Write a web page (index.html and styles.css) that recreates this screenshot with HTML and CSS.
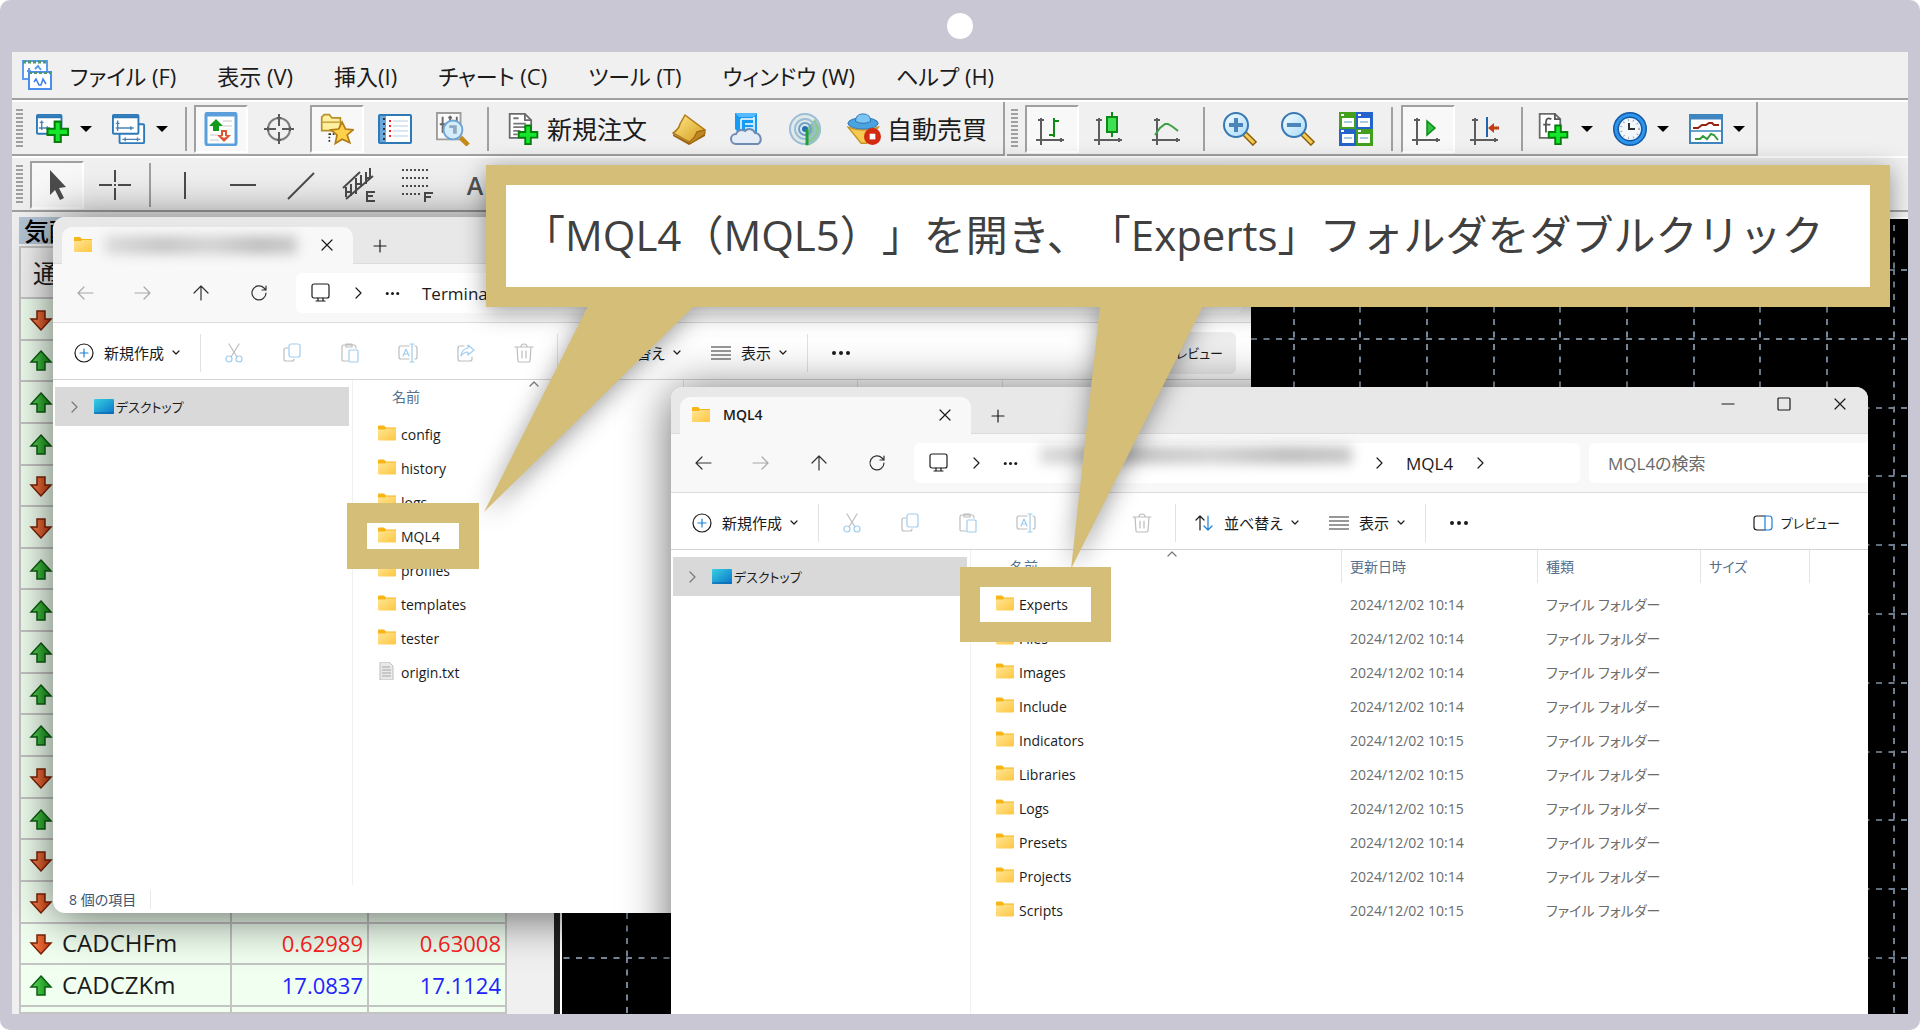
FILE: index.html
```html
<!DOCTYPE html>
<html lang="ja">
<head>
  <meta charset="UTF-8">
  <meta name="viewport" content="width=device-width, initial-scale=1.0">
  <title>MQL4 Experts</title>
  <link rel="stylesheet" href="styles.css">
</head>
<body>
  <!-- Icon sprite -->
  <svg class="sprite" aria-hidden="true">
    <defs>
      <linearGradient id="g-folder" x1="0" y1="0" x2="1" y2="1"><stop offset="0" stop-color="#ffe596"/><stop offset="1" stop-color="#fdc741"/></linearGradient>
      <linearGradient id="g-desk" x1="0" y1="0" x2="1" y2="1"><stop offset="0" stop-color="#36d0e2"/><stop offset="1" stop-color="#0b74c8"/></linearGradient>
      <linearGradient id="g-up" x1="0" x2="1"><stop offset="0" stop-color="#5fd65a"/><stop offset="1" stop-color="#0c8a14"/></linearGradient>
      <linearGradient id="g-down" x1="0" x2="1"><stop offset="0" stop-color="#ff8a55"/><stop offset="1" stop-color="#c4390c"/></linearGradient>
      <linearGradient id="g-gold" x1="0" y1="0" x2="1" y2="1"><stop offset="0" stop-color="#ffe98a"/><stop offset="1" stop-color="#d49a1c"/></linearGradient>
      <linearGradient id="g-lens" x1="0" y1="0" x2="1" y2="1"><stop offset="0" stop-color="#f4fbff"/><stop offset="1" stop-color="#a9dcfa"/></linearGradient>
      <pattern id="p-grid" x="64" y="50" width="200" height="344" patternUnits="userSpaceOnUse">
        <path d="M1 0V344M68 0V344M134 0V344" stroke="#778899" stroke-width="2" stroke-dasharray="6 6.5"/>
        <path d="M0 1H200M0 70H200M0 139H200M0 207H200M0 276H200" stroke="#778899" stroke-width="2" stroke-dasharray="6 6.5"/>
      </pattern>
    </defs>
    <symbol id="i-plus-green" viewBox="0 0 24 24"><path d="M8 1h8v7h7v8h-7v7H8v-7H1V8h7z" fill="#067d0c"/><path d="M10 3h4v7h7v4h-7v7h-4v-7H3v-4h7z" fill="#14e62c"/></symbol>
    <symbol id="i-app" viewBox="0 0 34 34">
      <rect x="3" y="3" width="24" height="18" fill="#fff" stroke="#5b9bf0" stroke-width="2"/><path d="M3 4h24" stroke="#4f9a6c" stroke-width="3" stroke-dasharray="3 2"/><path d="M7 13h4M9 10v6M15 11l3-3 3 4" fill="none" stroke="#5b9bf0" stroke-width="2"/>
      <rect x="9" y="14" width="22" height="17" fill="#fff" stroke="#4b8dea" stroke-width="2"/><path d="M9 15h22" stroke="#4f9a6c" stroke-width="2" stroke-dasharray="3 2"/><path d="M14 24l2-3 3 6h2l2-6 3 5" fill="none" stroke="#3a7eea" stroke-width="1.5"/>
    </symbol>
    <symbol id="i-new-chart" viewBox="0 0 36 34">
      <rect x="1" y="2" width="26" height="20" rx="1" fill="#fff" stroke="#2e79b8" stroke-width="2"/><path d="M1 4h26" stroke="#2e79b8" stroke-width="3"/><path d="M6 8v10M3 16h12M4 10h4M12 14v4" fill="none" stroke="#4a84b4" stroke-width="1.5"/>
      <use href="#i-plus-green" x="10" y="7" width="26" height="26"/>
    </symbol>
    <symbol id="i-profiles" viewBox="0 0 36 34">
      <rect x="8" y="12" width="26" height="20" rx="1" fill="#fff" stroke="#2e79b8" stroke-width="2"/><path d="M11 28h19M14 26v4M27 26v4" fill="none" stroke="#4a84b4" stroke-width="1.5"/>
      <rect x="1" y="2" width="27" height="20" rx="1" fill="#fff" stroke="#2e79b8" stroke-width="2"/><path d="M1 4h27" stroke="#2e79b8" stroke-width="3"/><path d="M6 8v11M4 16h19M4 11h4M20 14v4" fill="none" stroke="#4a84b4" stroke-width="1.5"/>
    </symbol>
    <symbol id="i-market" viewBox="0 0 34 34">
      <rect x="2" y="1" width="30" height="32" rx="2" fill="#fff" stroke="#5a9fdc" stroke-width="3"/><path d="M2 3h30" stroke="#5a9fdc" stroke-width="3"/><path d="M19 9h9M19 14h9M6 23h7M6 28h9" stroke="#e2e2e2" stroke-width="2"/>
      <path d="M12 7l7 7h-4v5H9v-5H5z" fill="#0f9a17"/><path d="M20 30l-7-7h4v-5h6v5h4z" fill="#dc5a33"/><path d="M20 26l-3-2h2v-4h2v4h2z" fill="#fff"/>
    </symbol>
    <symbol id="i-cross" viewBox="0 0 34 34"><circle cx="17" cy="17" r="11" fill="none" stroke="#7d7d7d" stroke-width="2"/><path d="M17 2v12M17 20v12M2 17h12M20 17h12M6 15v4M28 15v4M15 6h4M15 28h4" stroke="#5a5a5a" stroke-width="2"/></symbol>
    <symbol id="i-navigator" viewBox="0 0 40 36">
      <path d="M2 4l3-3h6l3 4h10v15H2z" fill="#fff0a0" stroke="#b8902a" stroke-width="2"/><path d="M2 10h21" stroke="#cfa846" stroke-width="2"/><path d="M11 23v12M11 24h6" stroke="#333" stroke-width="2" stroke-dasharray="2 2"/>
      <path d="M26 10l4 8 9 1-7 6 3 9-9-4-8 5 2-10-7-6 9-1z" fill="#ffd04a" stroke="#b27c14" stroke-width="2"/>
    </symbol>
    <symbol id="i-data" viewBox="0 0 34 34"><rect x="1" y="3" width="32" height="28" rx="1" fill="#fff" stroke="#2e79b8" stroke-width="2"/><path d="M5 4v26" stroke="#6aa8dc" stroke-width="6"/><path d="M6 6v24" stroke="#333" stroke-width="2" stroke-dasharray="2 3"/><path d="M12 8v20" stroke="#e23" stroke-width="2" stroke-dasharray="2 3"/><path d="M15 9h15M15 14h15M15 19h15M15 24h15" stroke="#dbe7f2" stroke-width="2"/></symbol>
    <symbol id="i-tester" viewBox="0 0 36 36"><path d="M1 1h25v28H1z" fill="#fafafa" stroke="#9d9d9d" stroke-width="2"/><path d="M7 5v17M4 13h6M15 4v6M22 5v6M13 6h4" stroke="#666" stroke-width="2"/><path d="M26 27l8 8" stroke="#c58a1c" stroke-width="5"/><circle cx="18" cy="19" r="10" fill="#d5ecfb" stroke="#6da4d4" stroke-width="2"/><path d="M14 14h8v9h-4v-6h-4z" fill="#8fa9bf"/></symbol>
    <symbol id="i-order" viewBox="0 0 34 38"><path d="M1 2h17l7 7v20H1z" fill="#fff" stroke="#6b6b6b" stroke-width="2"/><path d="M18 2v7h7" fill="none" stroke="#6b6b6b" stroke-width="2"/><path d="M5 7h6M5 13h14M5 17h14M5 21h8M5 25h5" stroke="#777" stroke-width="2"/><use href="#i-plus-green" x="9" y="13" width="25" height="25"/></symbol>
    <symbol id="i-book" viewBox="0 0 34 34"><path d="M1 22l17 9 15-11v4L17 33 1 24z" fill="#9b6412"/><path d="M1 21Q7 17 8 12L13 3l20 15-8 2q-3 8-8 10z" fill="url(#g-gold)" stroke="#b07a17" stroke-width="1.5"/><path d="M33 18v4L18 32l-1-2q6-3 8-10z" fill="#c08520" stroke="#9b6412"/></symbol>
    <symbol id="i-cloud" viewBox="0 0 34 34"><path d="M5 1h22v20H9L5 17z" fill="#159bf5"/><path d="M5 1h22l-3 4H9z" fill="#57b9fb"/><path d="M11 7v13M11 7h13M15 12h8M15 16h8M24 5v15" fill="none" stroke="#fff" stroke-width="1.5"/><path d="M6 32a5 5 0 0 1 0-10 6 6 0 0 1 9-3 6 6 0 0 1 10 2 6 6 0 0 1 3 11z" fill="#e6ecf5" stroke="#6f8db4" stroke-width="2"/></symbol>
    <symbol id="i-signal" viewBox="0 0 34 34"><circle cx="17" cy="17" r="16" fill="#dfeae8"/><path d="M18 17v17A17 17 0 0 0 33 17L27 7z" fill="#6ab870" opacity=".7"/><g fill="none" stroke="#9bbdd6" stroke-width="2"><circle cx="17" cy="17" r="15"/><circle cx="17" cy="17" r="10"/><circle cx="17" cy="17" r="6" stroke="#6f9fc6"/></g><circle cx="17" cy="17" r="3" fill="#2470bd"/><path d="M19 17v16" stroke="#22a03a" stroke-width="3"/></symbol>
    <symbol id="i-auto" viewBox="0 0 36 34"><path d="M1 15q16 6 32 0L21 32h-6z" fill="#f6c951" stroke="#c69324" stroke-width="1.5"/><ellipse cx="17" cy="11" rx="16" ry="6" fill="#4aa3de" stroke="#2a74b3"/><path d="M9 9q0-8 8-8t8 8q-8 4-16 0z" fill="#7cc4f2" stroke="#2a74b3"/><circle cx="27" cy="25" r="9" fill="#d32a12"/><rect x="24" y="22" width="6" height="6" fill="#fff"/></symbol>
    <symbol id="i-bars" viewBox="0 0 34 34"><path d="M6 6v27M1 28h28M3 8h6M26 26v4" fill="none" stroke="#5d5d5d" stroke-width="2"/><path d="M19 6v19M14 23h5M19 9h5" stroke="#108a16" stroke-width="2"/></symbol>
    <symbol id="i-candle" viewBox="0 0 34 34"><path d="M6 6v27M1 28h28M3 8h6M26 26v4" fill="none" stroke="#5d5d5d" stroke-width="2"/><path d="M19 0v25" stroke="#108a16" stroke-width="2"/><rect x="14" y="5" width="10" height="15" fill="#3de152" stroke="#108a16" stroke-width="2"/></symbol>
    <symbol id="i-line" viewBox="0 0 34 34"><path d="M6 6v27M1 28h28M3 8h6M26 26v4" fill="none" stroke="#5d5d5d" stroke-width="2"/><path d="M4 23l5-7 5-4h3l5 3 5 4" fill="none" stroke="#3da044" stroke-width="2"/></symbol>
    <symbol id="i-zoom-in" viewBox="0 0 34 34"><path d="M21 21l11 11" stroke="#8f5f0c" stroke-width="6"/><path d="M22 22l9 9" stroke="#f3cf58" stroke-width="3"/><circle cx="13" cy="13" r="12" fill="url(#g-lens)" stroke="#3878b4" stroke-width="2"/><path d="M13 6v14M6 13h14" stroke="#4c86b8" stroke-width="4"/></symbol>
    <symbol id="i-zoom-out" viewBox="0 0 34 34"><path d="M21 21l11 11" stroke="#8f5f0c" stroke-width="6"/><path d="M22 22l9 9" stroke="#f3cf58" stroke-width="3"/><circle cx="13" cy="13" r="12" fill="url(#g-lens)" stroke="#3878b4" stroke-width="2"/><path d="M6 13h14" stroke="#4c86b8" stroke-width="4"/></symbol>
    <symbol id="i-tile" viewBox="0 0 34 34"><path d="M0 0h17v17H0zM17 17h17v17H17z" fill="#43a01c"/><path d="M17 0h17v17H17zM0 17h17v17H0z" fill="#2463cc"/><path d="M3 6h12v9H3zM19 6h12v9H19zM3 22h12v9H3zM19 22h12v9H19z" fill="#fff"/><path d="M5 10h8M21 10h8M5 26h8M21 26h8" stroke="#a9cbe0" stroke-width="2"/><path d="M2 3h3M19 3h3M2 19h3M19 19h3" stroke="#fff" stroke-width="2"/></symbol>
    <symbol id="i-scroll" viewBox="0 0 34 34"><path d="M6 6v27M1 28h28M3 8h6M26 26v4" fill="none" stroke="#5d5d5d" stroke-width="2"/><path d="M16 9l8 7-8 7z" fill="#2fc341" stroke="#108a16" stroke-width="1.5"/></symbol>
    <symbol id="i-shift" viewBox="0 0 34 34"><path d="M6 6v27M1 28h28M3 8h6M26 26v4" fill="none" stroke="#5d5d5d" stroke-width="2"/><path d="M18 5v20" stroke="#1c66ad" stroke-width="2"/><path d="M30 16h-6" stroke="#c23e12" stroke-width="3"/><path d="M19 16l6-5v10z" fill="#c23e12"/></symbol>
    <symbol id="i-indicator" viewBox="0 0 34 38"><path d="M1 2h17l6 6v21H1z" fill="#fff" stroke="#6b6b6b" stroke-width="2"/><path d="M18 2v6h6M14 8q-6-3-6 4v11M5 14h8" fill="none" stroke="#555" stroke-width="2"/><use href="#i-plus-green" x="9" y="13" width="25" height="25"/></symbol>
    <symbol id="i-clock" viewBox="0 0 34 34"><circle cx="17" cy="17" r="14" fill="#f2f7fb" stroke="#1159a8" stroke-width="6"/><circle cx="17" cy="17" r="14" fill="none" stroke="#2f94ea" stroke-width="3"/><path d="M16 11v6h6" fill="none" stroke="#333" stroke-width="2"/><circle cx="17" cy="17" r="9" fill="none" stroke="#9aa7b2" stroke-width="2" stroke-dasharray="1 4"/></symbol>
    <symbol id="i-template" viewBox="0 0 34 34"><rect x="1" y="3" width="32" height="28" fill="#fff" stroke="#3f85c0" stroke-width="2"/><path d="M1 5h32" stroke="#3f85c0" stroke-width="5"/><path d="M2 19h30" stroke="#6ba3d0" stroke-width="2"/><path d="M4 16h5l4-3h4l3-2h3l2 2h5" fill="none" stroke="#962312" stroke-width="2"/><path d="M6 27h5l3-3 4 3 4-5 3 1 4 5" fill="none" stroke="#329a38" stroke-width="2"/></symbol>
    <symbol id="i-cursor" viewBox="0 0 34 34"><path d="M10 2l16 17-7 1 5 10-4 2-5-10-5 5z" fill="#4c4c4c"/></symbol>
    <symbol id="i-crosshair" viewBox="0 0 34 34"><path d="M17 2v12M17 20v12M1 17h13M20 17h13M16 17h2" stroke="#4c4c4c" stroke-width="2"/></symbol>
    <symbol id="i-vline" viewBox="0 0 34 34"><path d="M17 4v27" stroke="#4c4c4c" stroke-width="2"/></symbol>
    <symbol id="i-hline" viewBox="0 0 34 34"><path d="M4 17h26" stroke="#4c4c4c" stroke-width="2"/></symbol>
    <symbol id="i-trend" viewBox="0 0 34 34"><path d="M4 31L30 5" stroke="#4c4c4c" stroke-width="2"/></symbol>
    <symbol id="i-channel" viewBox="0 0 34 34"><path d="M1 20L18 4M4 31L31 8M4 19v10M9 16v12M14 10v16M19 7v12M24 4v12M28 0v11M4 24h5M14 16h5M24 10h4" stroke="#4c4c4c" stroke-width="2"/><path d="M33 24h-8v9h8M25 28h6" fill="none" stroke="#4c4c4c" stroke-width="2"/></symbol>
    <symbol id="i-fibo" viewBox="0 0 34 34"><path d="M2 2h28M2 10h28M2 18h28M2 26h20" stroke="#4c4c4c" stroke-width="2" stroke-dasharray="2 2"/><path d="M25 34V25h8M25 29h6" fill="none" stroke="#4c4c4c" stroke-width="2"/></symbol>

    <symbol id="i-up" viewBox="0 0 24 24"><path d="M12 2l10 11h-6v8H8v-8H2z" fill="url(#g-up)" stroke="#0b5d10" stroke-width="1.5"/></symbol>
    <symbol id="i-down" viewBox="0 0 24 24"><path d="M12 22L2 11h6V3h8v8h6z" fill="url(#g-down)" stroke="#7c2208" stroke-width="1.5"/></symbol>

    <symbol id="i-folder" viewBox="0 0 18 15"><path d="M0 1q0-1 1-1h5l2 2h10v5H0z" fill="#f8b516"/><path d="M0 4h7l1-1h10v11q0 1-1 1H1q-1 0-1-1z" fill="url(#g-folder)"/></symbol>
    <symbol id="i-file" viewBox="0 0 18 18"><path d="M2 0h9l4 4v14H2z" fill="#e9e9e9" stroke="#bdbdbd"/><path d="M4 5h8M4 8h9M4 11h9M4 14h9" stroke="#a5a5a5"/></symbol>
    <symbol id="i-desktop" viewBox="0 0 20 15"><rect width="20" height="15" rx="1" fill="url(#g-desk)"/><path d="M0 14h20" stroke="#0a5fa8"/></symbol>
    <symbol id="i-back" viewBox="0 0 20 20"><path d="M18 10H3M9 4l-6 6 6 6" class="ln"/></symbol>
    <symbol id="i-forward" viewBox="0 0 20 20"><path d="M2 10h15M11 4l6 6-6 6" class="ln"/></symbol>
    <symbol id="i-parent" viewBox="0 0 20 20"><path d="M10 17V3M3 10l7-7 7 7" class="ln"/></symbol>
    <symbol id="i-reload" viewBox="0 0 20 20"><path d="M17 10a7 7 0 1 1-2-5l2 2M17 3v4h-4" class="ln"/></symbol>
    <symbol id="i-monitor" viewBox="0 0 20 20"><rect x="1" y="1" width="17" height="14" rx="2" class="ln"/><path d="M7 15v3M12 15v3M5 18h9" class="ln"/></symbol>
    <symbol id="i-chev-r" viewBox="0 0 10 14"><path d="M3 2l5 5-5 5" class="ln"/></symbol>
    <symbol id="i-chev-d" viewBox="0 0 10 10"><path d="M2 3l3 3 3-3" class="ln"/></symbol>
    <symbol id="i-chev-u" viewBox="0 0 10 6"><path d="M1 5l4-4 4 4" class="ln"/></symbol>
    <symbol id="i-dots" viewBox="0 0 20 6"><circle cx="3" cy="3" r="2" fill="currentColor"/><circle cx="10" cy="3" r="2" fill="currentColor"/><circle cx="17" cy="3" r="2" fill="currentColor"/></symbol>
    <symbol id="i-x" viewBox="0 0 14 14"><path d="M2 2l10 10M12 2L2 12" class="ln"/></symbol>
    <symbol id="i-plus" viewBox="0 0 14 14"><path d="M7 1v12M1 7h12" class="ln"/></symbol>
    <symbol id="i-min" viewBox="0 0 14 14"><path d="M1 7h12" class="ln"/></symbol>
    <symbol id="i-max" viewBox="0 0 14 14"><rect x="1" y="1" width="12" height="12" rx="1" class="ln"/></symbol>
    <symbol id="i-new" viewBox="0 0 20 20"><circle cx="10" cy="10" r="9" class="ln"/><path d="M10 6v8M6 10h8" class="ln blue"/></symbol>
    <symbol id="i-cut" viewBox="0 0 20 20"><path d="M5 1l8 13M15 1L7 14" class="ln pale"/><circle cx="5" cy="16" r="3" class="ln sky"/><circle cx="15" cy="16" r="3" class="ln sky"/></symbol>
    <symbol id="i-copy" viewBox="0 0 20 20"><path d="M6 5H4q-2 0-2 2v9q0 2 2 2h6q2 0 2-2" class="ln pale"/><rect x="7" y="1" width="11" height="13" rx="2" class="ln sky"/></symbol>
    <symbol id="i-paste" viewBox="0 0 20 20"><path d="M8 18H4q-2 0-2-1V4q0-2 2-2h10q2 0 2 3M6 1h6v3H6z" class="ln pale"/><rect x="9" y="7" width="9" height="12" rx="1" class="ln sky"/></symbol>
    <symbol id="i-rename" viewBox="0 0 20 20"><path d="M11 3H3q-2 0-2 2v9q0 2 2 2h8M17 3q2 0 2 2v9q0 2-2 2" class="ln pale"/><path d="M14 1v18M12 1h4M12 19h4M5 13l3-7 3 7M6 11h4" class="ln sky"/></symbol>
    <symbol id="i-share" viewBox="0 0 20 20"><path d="M8 3H4Q2 3 2 5v11q0 2 2 2h10q2 0 2-2v-2" class="ln pale"/><path d="M12 2l6 5-6 5V9q-4 0-7 4 1-7 7-8z" class="ln sky"/></symbol>
    <symbol id="i-trash" viewBox="0 0 20 20"><path d="M1 4h18M7 4q0-3 3-3t3 3M3 4l1 14q0 1 2 1h8q2 0 2-1l1-14M8 8v7M12 8v7" class="ln pale"/></symbol>
    <symbol id="i-sort" viewBox="0 0 20 20"><path d="M6 17V3M2 7l4-4 4 4" class="ln"/><path d="M14 3v14M10 13l4 4 4-4" class="ln blue"/></symbol>
    <symbol id="i-list" viewBox="0 0 20 20"><path d="M0 4h20M0 8h20M0 12h20M0 16h20" stroke="#777" stroke-width="1.5"/></symbol>
    <symbol id="i-preview" viewBox="0 0 20 20"><path d="M12 3H4Q1 3 1 6v8q0 3 3 3h8" class="ln"/><path d="M12 3h4q3 0 3 3v8q0 3-3 3h-4z" class="ln blue"/></symbol>
  </svg>

  <div class="camera"></div>

  <main class="screen">
    <!-- Trading terminal -->
    <nav class="menu">
      <svg class="menu-logo"><use href="#i-app"/></svg>
      <button>ファイル (F)</button>
      <button>表示 (V)</button>
      <button>挿入(I)</button>
      <button>チャート (C)</button>
      <button>ツール (T)</button>
      <button>ウィンドウ (W)</button>
      <button>ヘルプ (H)</button>
    </nav>

    <div class="toolbar-row">
      <div class="toolbar">
        <i class="grip"></i>
        <button class="tool drop" aria-label="新規チャート"><svg><use href="#i-new-chart"/></svg></button>
        <button class="tool drop" aria-label="プロファイル"><svg><use href="#i-profiles"/></svg></button>
        <i class="line"></i>
        <button class="tool on" aria-label="気配値"><svg><use href="#i-market"/></svg></button>
        <button class="tool" aria-label="照準"><svg><use href="#i-cross"/></svg></button>
        <button class="tool on" aria-label="ナビゲーター"><svg><use href="#i-navigator"/></svg></button>
        <button class="tool" aria-label="データ"><svg><use href="#i-data"/></svg></button>
        <button class="tool" aria-label="テスター"><svg><use href="#i-tester"/></svg></button>
        <i class="line"></i>
        <button class="tool wide"><svg><use href="#i-order"/></svg>新規注文</button>
        <button class="tool" aria-label="エディター"><svg><use href="#i-book"/></svg></button>
        <button class="tool" aria-label="クラウド"><svg><use href="#i-cloud"/></svg></button>
        <button class="tool" aria-label="シグナル"><svg><use href="#i-signal"/></svg></button>
        <button class="tool wide"><svg><use href="#i-auto"/></svg>自動売買</button>
      </div>
      <div class="toolbar charts">
        <i class="grip"></i>
        <button class="tool on" aria-label="バー"><svg><use href="#i-bars"/></svg></button>
        <button class="tool" aria-label="ローソク足"><svg><use href="#i-candle"/></svg></button>
        <button class="tool" aria-label="ライン"><svg><use href="#i-line"/></svg></button>
        <i class="line"></i>
        <button class="tool" aria-label="拡大"><svg><use href="#i-zoom-in"/></svg></button>
        <button class="tool" aria-label="縮小"><svg><use href="#i-zoom-out"/></svg></button>
        <button class="tool" aria-label="整列"><svg><use href="#i-tile"/></svg></button>
        <i class="line"></i>
        <button class="tool on" aria-label="自動スクロール"><svg><use href="#i-scroll"/></svg></button>
        <button class="tool" aria-label="シフト"><svg><use href="#i-shift"/></svg></button>
        <i class="line"></i>
        <button class="tool drop" aria-label="インディケータ"><svg><use href="#i-indicator"/></svg></button>
        <button class="tool drop" aria-label="時間足"><svg><use href="#i-clock"/></svg></button>
        <button class="tool drop" aria-label="定型チャート"><svg><use href="#i-template"/></svg></button>
      </div>
    </div>

    <div class="toolbar-row studies">
      <i class="grip"></i>
      <button class="tool on" aria-label="カーソル"><svg><use href="#i-cursor"/></svg></button>
      <button class="tool" aria-label="十字カーソル"><svg><use href="#i-crosshair"/></svg></button>
      <i class="line"></i>
      <button class="tool" aria-label="垂直線"><svg><use href="#i-vline"/></svg></button>
      <button class="tool" aria-label="水平線"><svg><use href="#i-hline"/></svg></button>
      <button class="tool" aria-label="トレンドライン"><svg><use href="#i-trend"/></svg></button>
      <button class="tool" aria-label="チャネル"><svg><use href="#i-channel"/></svg></button>
      <button class="tool" aria-label="フィボナッチ"><svg><use href="#i-fibo"/></svg></button>
      <button class="tool letter">A</button>
    </div>

    <div class="workspace">
      <section class="quotes">
        <h2>気配値表示</h2>
        <div class="quotes-body">
          <table>
            <thead><tr><th>通貨ペア</th><th></th><th></th></tr></thead>
            <tbody>
              <tr><td><svg><use href="#i-down"/></svg></td><td></td><td></td></tr>
              <tr><td><svg><use href="#i-up"/></svg></td><td></td><td></td></tr>
              <tr><td><svg><use href="#i-up"/></svg></td><td></td><td></td></tr>
              <tr><td><svg><use href="#i-up"/></svg></td><td></td><td></td></tr>
              <tr><td><svg><use href="#i-down"/></svg></td><td></td><td></td></tr>
              <tr><td><svg><use href="#i-down"/></svg></td><td></td><td></td></tr>
              <tr><td><svg><use href="#i-up"/></svg></td><td></td><td></td></tr>
              <tr><td><svg><use href="#i-up"/></svg></td><td></td><td></td></tr>
              <tr><td><svg><use href="#i-up"/></svg></td><td></td><td></td></tr>
              <tr><td><svg><use href="#i-up"/></svg></td><td></td><td></td></tr>
              <tr><td><svg><use href="#i-up"/></svg></td><td></td><td></td></tr>
              <tr><td><svg><use href="#i-down"/></svg></td><td></td><td></td></tr>
              <tr><td><svg><use href="#i-up"/></svg></td><td></td><td></td></tr>
              <tr><td><svg><use href="#i-down"/></svg></td><td></td><td></td></tr>
              <tr><td><svg><use href="#i-down"/></svg></td><td></td><td></td></tr>
              <tr class="fall"><td><svg><use href="#i-down"/></svg>CADCHFm</td><td>0.62989</td><td>0.63008</td></tr>
              <tr class="rise"><td><svg><use href="#i-up"/></svg>CADCZKm</td><td>17.0837</td><td>17.1124</td></tr>
              <tr class="cut"><td></td><td></td><td></td></tr>
            </tbody>
          </table>
        </div>
      </section>
      <svg class="chart"><rect width="100%" height="100%" fill="url(#p-grid)"/></svg>
    </div>

    <!-- Explorer: Terminal -->
    <section class="window window-back">
      <header class="tabs">
        <div class="tab">
          <svg class="folder"><use href="#i-folder"/></svg>
          <span class="tab-name"><i class="smudge"></i></span>
          <button aria-label="閉じる"><svg class="s14"><use href="#i-x"/></svg></button>
        </div>
        <button class="add" aria-label="タブを追加"><svg class="s14"><use href="#i-plus"/></svg></button>
      </header>
      <div class="nav">
        <button class="off" aria-label="戻る"><svg class="s20"><use href="#i-back"/></svg></button>
        <button class="off" aria-label="進む"><svg class="s20"><use href="#i-forward"/></svg></button>
        <button aria-label="上へ"><svg class="s20"><use href="#i-parent"/></svg></button>
        <button aria-label="更新"><svg class="s20"><use href="#i-reload"/></svg></button>
        <div class="address">
          <svg class="s20"><use href="#i-monitor"/></svg>
          <svg class="chev"><use href="#i-chev-r"/></svg>
          <svg class="dots"><use href="#i-dots"/></svg>
          <span>Terminal</span>
        </div>
      </div>
      <div class="commands">
        <button class="cmd"><svg class="s20"><use href="#i-new"/></svg>新規作成<svg class="s10"><use href="#i-chev-d"/></svg></button>
        <i class="rule"></i>
        <button class="act" aria-label="切り取り"><svg class="s20"><use href="#i-cut"/></svg></button>
        <button class="act" aria-label="コピー"><svg class="s20"><use href="#i-copy"/></svg></button>
        <button class="act" aria-label="貼り付け"><svg class="s20"><use href="#i-paste"/></svg></button>
        <button class="act" aria-label="名前の変更"><svg class="s20"><use href="#i-rename"/></svg></button>
        <button class="act" aria-label="共有"><svg class="s20"><use href="#i-share"/></svg></button>
        <button class="act" aria-label="削除"><svg class="s20"><use href="#i-trash"/></svg></button>
        <i class="rule"></i>
        <button class="cmd"><svg class="s20"><use href="#i-sort"/></svg>並べ替え<svg class="s10"><use href="#i-chev-d"/></svg></button>
        <button class="cmd"><svg class="s20"><use href="#i-list"/></svg>表示<svg class="s10"><use href="#i-chev-d"/></svg></button>
        <i class="rule"></i>
        <button class="act" aria-label="その他"><svg class="s20"><use href="#i-dots"/></svg></button>
        <button class="preview hover"><svg class="s20"><use href="#i-preview"/></svg>プレビュー</button>
      </div>
      <div class="panes">
        <aside><a href="#" class="place"><svg class="chev"><use href="#i-chev-r"/></svg><svg class="desk"><use href="#i-desktop"/></svg>デスクトップ</a></aside>
        <div class="list">
          <svg class="sorted"><use href="#i-chev-u"/></svg>
          <table class="files">
            <colgroup><col class="c-name"><col class="c-date"><col class="c-type"><col></colgroup>
            <thead><tr><th><span>名前</span></th><th><span></span></th><th><span></span></th><th></th></tr></thead>
            <tbody>
              <tr><td><svg class="ico"><use href="#i-folder"/></svg>config</td></tr>
              <tr><td><svg class="ico"><use href="#i-folder"/></svg>history</td></tr>
              <tr><td><svg class="ico"><use href="#i-folder"/></svg>logs</td></tr>
              <tr><td><svg class="ico"><use href="#i-folder"/></svg>MQL4</td></tr>
              <tr><td><svg class="ico"><use href="#i-folder"/></svg>profiles</td></tr>
              <tr><td><svg class="ico"><use href="#i-folder"/></svg>templates</td></tr>
              <tr><td><svg class="ico"><use href="#i-folder"/></svg>tester</td></tr>
              <tr><td><svg class="ico"><use href="#i-file"/></svg>origin.txt</td></tr>
            </tbody>
          </table>
        </div>
      </div>
      <footer class="status"><span>8 個の項目</span></footer>
    </section>

    <!-- Explorer: MQL4 -->
    <section class="window window-front">
      <header class="tabs">
        <div class="tab">
          <svg class="folder"><use href="#i-folder"/></svg>
          <span class="tab-name">MQL4</span>
          <button aria-label="閉じる"><svg class="s14"><use href="#i-x"/></svg></button>
        </div>
        <button class="add" aria-label="タブを追加"><svg class="s14"><use href="#i-plus"/></svg></button>
        <div class="controls">
          <button aria-label="最小化"><svg class="s14"><use href="#i-min"/></svg></button>
          <button aria-label="最大化"><svg class="s14"><use href="#i-max"/></svg></button>
          <button aria-label="閉じる"><svg class="s14"><use href="#i-x"/></svg></button>
        </div>
      </header>
      <div class="nav">
        <button aria-label="戻る"><svg class="s20"><use href="#i-back"/></svg></button>
        <button class="off" aria-label="進む"><svg class="s20"><use href="#i-forward"/></svg></button>
        <button aria-label="上へ"><svg class="s20"><use href="#i-parent"/></svg></button>
        <button aria-label="更新"><svg class="s20"><use href="#i-reload"/></svg></button>
        <div class="address">
          <svg class="s20"><use href="#i-monitor"/></svg>
          <svg class="chev"><use href="#i-chev-r"/></svg>
          <svg class="dots"><use href="#i-dots"/></svg>
          <i class="smudge long"></i>
          <svg class="chev"><use href="#i-chev-r"/></svg>
          <span>MQL4</span>
          <svg class="chev"><use href="#i-chev-r"/></svg>
        </div>
        <input class="search" type="search" placeholder="MQL4の検索" aria-label="MQL4の検索">
      </div>
      <div class="commands">
        <button class="cmd"><svg class="s20"><use href="#i-new"/></svg>新規作成<svg class="s10"><use href="#i-chev-d"/></svg></button>
        <i class="rule"></i>
        <button class="act" aria-label="切り取り"><svg class="s20"><use href="#i-cut"/></svg></button>
        <button class="act" aria-label="コピー"><svg class="s20"><use href="#i-copy"/></svg></button>
        <button class="act" aria-label="貼り付け"><svg class="s20"><use href="#i-paste"/></svg></button>
        <button class="act" aria-label="名前の変更"><svg class="s20"><use href="#i-rename"/></svg></button>
        <button class="act" aria-label="共有"></button>
        <button class="act" aria-label="削除"><svg class="s20"><use href="#i-trash"/></svg></button>
        <i class="rule"></i>
        <button class="cmd"><svg class="s20"><use href="#i-sort"/></svg>並べ替え<svg class="s10"><use href="#i-chev-d"/></svg></button>
        <button class="cmd"><svg class="s20"><use href="#i-list"/></svg>表示<svg class="s10"><use href="#i-chev-d"/></svg></button>
        <i class="rule"></i>
        <button class="act" aria-label="その他"><svg class="s20"><use href="#i-dots"/></svg></button>
        <button class="preview"><svg class="s20"><use href="#i-preview"/></svg>プレビュー</button>
      </div>
      <div class="panes">
        <aside><a href="#" class="place"><svg class="chev"><use href="#i-chev-r"/></svg><svg class="desk"><use href="#i-desktop"/></svg>デスクトップ</a></aside>
        <div class="list">
          <svg class="sorted"><use href="#i-chev-u"/></svg>
          <table class="files">
            <colgroup><col class="c-name"><col class="c-date"><col class="c-type"><col class="c-size"><col></colgroup>
            <thead><tr><th><span>名前</span></th><th><span>更新日時</span></th><th><span>種類</span></th><th><span>サイズ</span></th><th></th></tr></thead>
            <tbody>
              <tr><td><svg class="ico"><use href="#i-folder"/></svg>Experts</td><td>2024/12/02 10:14</td><td>ファイル フォルダー</td></tr>
              <tr><td><svg class="ico"><use href="#i-folder"/></svg>Files</td><td>2024/12/02 10:14</td><td>ファイル フォルダー</td></tr>
              <tr><td><svg class="ico"><use href="#i-folder"/></svg>Images</td><td>2024/12/02 10:14</td><td>ファイル フォルダー</td></tr>
              <tr><td><svg class="ico"><use href="#i-folder"/></svg>Include</td><td>2024/12/02 10:14</td><td>ファイル フォルダー</td></tr>
              <tr><td><svg class="ico"><use href="#i-folder"/></svg>Indicators</td><td>2024/12/02 10:15</td><td>ファイル フォルダー</td></tr>
              <tr><td><svg class="ico"><use href="#i-folder"/></svg>Libraries</td><td>2024/12/02 10:15</td><td>ファイル フォルダー</td></tr>
              <tr><td><svg class="ico"><use href="#i-folder"/></svg>Logs</td><td>2024/12/02 10:15</td><td>ファイル フォルダー</td></tr>
              <tr><td><svg class="ico"><use href="#i-folder"/></svg>Presets</td><td>2024/12/02 10:14</td><td>ファイル フォルダー</td></tr>
              <tr><td><svg class="ico"><use href="#i-folder"/></svg>Projects</td><td>2024/12/02 10:14</td><td>ファイル フォルダー</td></tr>
              <tr><td><svg class="ico"><use href="#i-folder"/></svg>Scripts</td><td>2024/12/02 10:15</td><td>ファイル フォルダー</td></tr>
            </tbody>
          </table>
        </div>
      </div>
    </section>

    <!-- Callout and the two marked folders -->
    <div class="callout">
      <svg class="pointers" viewBox="0 0 730 264"><path d="M106 0h106L2 206zM618 0h103L589 263z" fill="#d5be78"/></svg>
      <p>「MQL4（MQL5）」を開き、「Experts」フォルダをダブルクリック</p>
    </div>
    <div class="mark mark-mql4"></div>
    <div class="mark mark-experts"></div>
  </main>
</body>
</html>
```
FILE: styles.css
```css
* {
  box-sizing: border-box;
}

html {
  background: #fff;
}

body {
  margin: 0;
  height: 100vh;
  padding: 0 12px 16px;
  display: flex;
  flex-direction: column;
  background: #c8c7d3;
  border-radius: 10px;
  overflow: hidden;
  font-family: "Open Sans", "Noto Sans CJK JP", sans-serif;
  font-feature-settings: "palt";
  font-size: 14px;
  color: #1b1b1b;
}

button {
  margin: 0;
  padding: 0;
  border: 0;
  background: none;
  font: inherit;
  font-feature-settings: inherit;
  color: inherit;
  display: flex;
  align-items: center;
  justify-content: center;
  white-space: nowrap;
}

svg {
  flex: none;
}

.sprite {
  position: absolute;
  width: 0;
  height: 0;
}

.ln {
  fill: none;
  stroke: currentColor;
  stroke-width: 1.2;
  stroke-linecap: round;
  stroke-linejoin: round;
}

.blue { stroke: #1a7fd4; }
.sky { stroke: #9fcdf0; }
.pale { stroke: #bdbdbd; }

.s10 { width: 10px; height: 10px; }
.s14 { width: 14px; height: 14px; }
.s20 { width: 20px; height: 20px; }
.chev { width: 10px; height: 14px; }
.dots { width: 15px; height: 5px; }

.camera {
  width: 26px;
  height: 26px;
  margin: 13px auto;
  border-radius: 50%;
  background: #fff;
  flex: none;
}

.screen {
  position: relative;
  flex: 1;
  min-height: 0;
  display: flex;
  flex-direction: column;
  overflow: hidden;
  background: #f0f0f0;
}

/* Trading terminal */
.menu {
  height: 48px;
  flex: none;
  display: flex;
  align-items: center;
  gap: 41px;
  padding-left: 8px;
  border-bottom: 2px solid #a0a0a0;
  font-size: 22px;
}

.menu-logo {
  width: 34px;
  height: 34px;
  margin-right: -25px;
}

.toolbar-row {
  display: flex;
  flex: none;
  height: 56px;
  border-top: 2px solid #fff;
}

.toolbar {
  display: flex;
  align-items: center;
  gap: 4px;
  padding: 2px 1px 0 4px;
  border: solid #a0a0a0;
  border-width: 0 2px 2px 0;
}

.toolbar:first-child {
  padding-right: 5px;
  margin-right: 2px;
}

.studies {
  align-items: center;
  gap: 4px;
  padding: 2px 0 0 4px;
  border-bottom: 2px solid #a0a0a0;
}

.grip {
  width: 7px;
  height: 40px;
  margin-right: 3px;
  flex: none;
  background: repeating-linear-gradient(#a0a0a0 0 2px, transparent 2px 4px);
}

.line {
  width: 2px;
  height: 44px;
  margin: 0 3px;
  flex: none;
  background: #a0a0a0;
}

.charts .line {
  margin: 0 4px;
}

.tool {
  width: 54px;
  height: 48px;
  flex: none;
  border: 2px solid transparent;
}

.tool svg {
  width: 34px;
  height: 34px;
}

.tool.on {
  background: #f8f8f8;
  border-color: #a0a0a0 #fff #fff #a0a0a0;
}

.tool.drop {
  width: 72px;
  justify-content: flex-start;
  padding-left: 4px;
  gap: 10px;
}

.tool.drop::after {
  content: "";
  border: 6px solid transparent;
  border-top-color: #000;
  border-bottom: 0;
}

.tool.wide {
  width: 162px;
  justify-content: flex-start;
  padding-left: 9px;
  gap: 6px;
  font-size: 25px;
  line-height: 30px;
}

.tool.letter {
  font-size: 25px;
  font-weight: 600;
  color: #555;
}

.workspace {
  flex: 1;
  min-height: 0;
  display: flex;
  padding-top: 5px;
}

.quotes {
  width: 548px;
  flex: none;
  display: flex;
  flex-direction: column;
  padding: 0 47px 0 7px;
  border-right: 6px solid #222;
}

.quotes h2 {
  margin: 0 0 2px;
  padding-left: 5px;
  height: 27px;
  line-height: 28px;
  font-size: 25px;
  font-weight: 500;
  background: #b4c4d4;
  color: #000;
}

.quotes-body {
  flex: 1;
  min-height: 0;
}

.quotes table {
  width: 100%;
  height: 100%;
  table-layout: fixed;
  border-collapse: collapse;
  font-size: 25px;
  line-height: 30px;
}

.quotes th,
.quotes td {
  padding: 0 4px 0 0;
  border: 2px solid #c4c4c4;
}

.quotes th {
  height: 51px;
  padding-left: 12px;
  text-align: left;
  font-weight: 400;
  background: #f2f2f2;
}

.quotes th:first-child { width: 211px; }
.quotes th:nth-child(2) { width: 137px; }

.quotes td {
  background: #f0fff0;
  text-align: right;
  font-size: 22px;
}

.quotes td:first-child {
  padding-left: 8px;
  text-align: left;
  font-size: 24px;
}

.quotes td svg {
  width: 24px;
  height: 24px;
  margin-right: 9px;
  vertical-align: -4px;
}

.quotes .cut td { height: 7px; }
.fall td + td { color: #f22; }
.rise td + td { color: #22f; }

.chart {
  flex: 1;
  height: 100%;
  min-width: 0;
  background: #000;
  border: solid #fff;
  border-width: 2px 0 0 2px;
}

/* Explorer windows */
.window {
  position: absolute;
  display: flex;
  flex-direction: column;
  overflow: hidden;
  border-radius: 12px;
  background: #fff;
  box-shadow: 0 4px 48px rgba(0, 0, 0, 0.6);
}

.window-back {
  left: 41px;
  right: 657px;
  top: 165px;
  bottom: 101px;
}

.window-front {
  left: 659px;
  right: 40px;
  top: 335px;
  bottom: 0;
  border-radius: 12px 12px 0 0;
}

.tabs {
  height: 47px;
  flex: none;
  display: flex;
  align-items: flex-end;
  padding-left: 9px;
  background: #e8e8e8;
  border-bottom: 1px solid #dcdcdc;
}

.tab {
  width: 291px;
  height: 37px;
  margin-bottom: -1px;
  padding: 0 19px 2px 12px;
  display: flex;
  align-items: center;
  border-radius: 10px 10px 0 0;
  background: #f8f8f8;
}

.folder {
  width: 18px;
  height: 15px;
  margin-right: 13px;
}

.tab-name {
  flex: 1;
  font-weight: 600;
}

.smudge {
  display: block;
  width: 192px;
  height: 18px;
  background: linear-gradient(90deg, #dadada, #c4c4c4 30%, #d2d2d2 55%, #bdbdbd 80%, #c8c8c8);
  filter: blur(6px);
}

.smudge.long {
  width: 312px;
  margin-bottom: 16px;
}

.add {
  width: 54px;
  height: 35px;
}

.controls {
  display: flex;
  align-self: flex-start;
  margin-left: auto;
}

.controls button {
  width: 56px;
  height: 33px;
}

.nav {
  height: 59px;
  flex: none;
  display: flex;
  align-items: center;
  padding-left: 3px;
  background: #f8f8f8;
  border-bottom: 1px solid #dcdcdc;
  font-size: 17px;
}

.nav button {
  width: 58px;
  height: 40px;
  color: #333;
}

.nav button.off {
  color: #a8a8a8;
}

.address {
  flex: 1;
  height: 40px;
  margin: 0 9px 0 8px;
  padding-left: 15px;
  display: flex;
  align-items: center;
  gap: 22px;
  border-radius: 6px;
  background: #fff;
}

.search {
  width: 279px;
  height: 40px;
  padding: 0 19px;
  border: 0;
  border-radius: 6px 0 0 6px;
  background: #fff;
  font: inherit;
  font-feature-settings: inherit;
}

.search::placeholder {
  color: #6a6a6a;
}

.commands {
  height: 57px;
  flex: none;
  display: flex;
  align-items: center;
  padding: 3px 15px 0 7px;
  border-bottom: 1px solid #d4d4d4;
  font-size: 15px;
}

.cmd {
  gap: 10px;
  padding: 0 15px 0 14px;
}

.cmd .s10 {
  margin-left: -3px;
}

.rule {
  width: 1px;
  height: 38px;
  margin: 0 4px;
  background: #e2e2e2;
}

.act {
  width: 58px;
  height: 40px;
}

.preview {
  height: 42px;
  margin-left: auto;
  padding: 0 13px;
  gap: 8px;
  border-radius: 6px;
  font-size: 13px;
}

.preview.hover {
  background: #eee;
}

.panes {
  flex: 1;
  min-height: 0;
  display: flex;
}

aside {
  width: 300px;
  flex: none;
  padding: 7px 3px 0 2px;
  border-right: 1px solid #f0f0f0;
}

.place {
  height: 39px;
  padding-left: 14px;
  display: flex;
  align-items: center;
  background: #d9d9d9;
  color: inherit;
  font-size: 13px;
  text-decoration: none;
}

.place .chev {
  color: #777;
}

.desk {
  width: 20px;
  height: 15px;
  margin: 0 2px 0 15px;
}

.list {
  position: relative;
  flex: 1;
  min-width: 0;
}

.sorted {
  position: absolute;
  left: 176px;
  top: 1px;
  width: 10px;
  height: 6px;
  color: #777;
}

.window-front .sorted {
  left: 196px;
}

.files {
  width: 100%;
  table-layout: fixed;
  border-collapse: collapse;
}

.c-name { width: 371px; }
.c-date { width: 196px; }
.c-type { width: 163px; }
.c-size { width: 109px; }

.window-back .c-name { width: 331px; }
.window-back .c-date { width: 174px; }
.window-back .c-type { width: 145px; }

.files th {
  height: 37px;
  padding: 0;
  vertical-align: top;
  text-align: left;
  font-weight: 400;
  color: #56708c;
}

.files th span {
  display: block;
  height: 33px;
  line-height: 33px;
  padding-left: 8px;
  border-right: 1px solid #e4e4e4;
}

.files th:first-child span {
  padding-left: 39px;
}

.files td {
  height: 34px;
  padding: 0 0 0 8px;
  color: #6c6c6c;
  white-space: nowrap;
}

.files td:first-child {
  padding-left: 25px;
  color: #1b1b1b;
}

.ico {
  width: 18px;
  height: 18px;
  margin-right: 5px;
  vertical-align: -2px;
}

.status {
  height: 28px;
  flex: none;
  padding: 4px 0 0 16px;
  color: #3c5470;
}

.status span {
  padding-right: 14px;
  border-right: 1px solid #e8e8e8;
}

/* Callout */
.callout {
  position: absolute;
  left: 474px;
  right: 18px;
  top: 113px;
  filter: drop-shadow(0 4px 12px rgba(0, 0, 0, 0.4));
}

.callout p {
  margin: 0;
  padding: 17px 17px 19px;
  border: 20px solid #d5be78;
  background: #fff;
  font-size: 42px;
  line-height: 66px;
  font-feature-settings: normal;
  text-spacing-trim: space-all;
  white-space: nowrap;
  color: #404040;
}

.pointers {
  position: absolute;
  left: -4px;
  top: 141px;
  width: 730px;
  height: 264px;
}

.mark {
  position: absolute;
  border: 20px solid #d5be78;
}

.mark-mql4 {
  left: 335px;
  top: 451px;
  width: 132px;
  height: 66px;
}

.mark-experts {
  left: 948px;
  top: 515px;
  width: 151px;
  height: 75px;
}
```
